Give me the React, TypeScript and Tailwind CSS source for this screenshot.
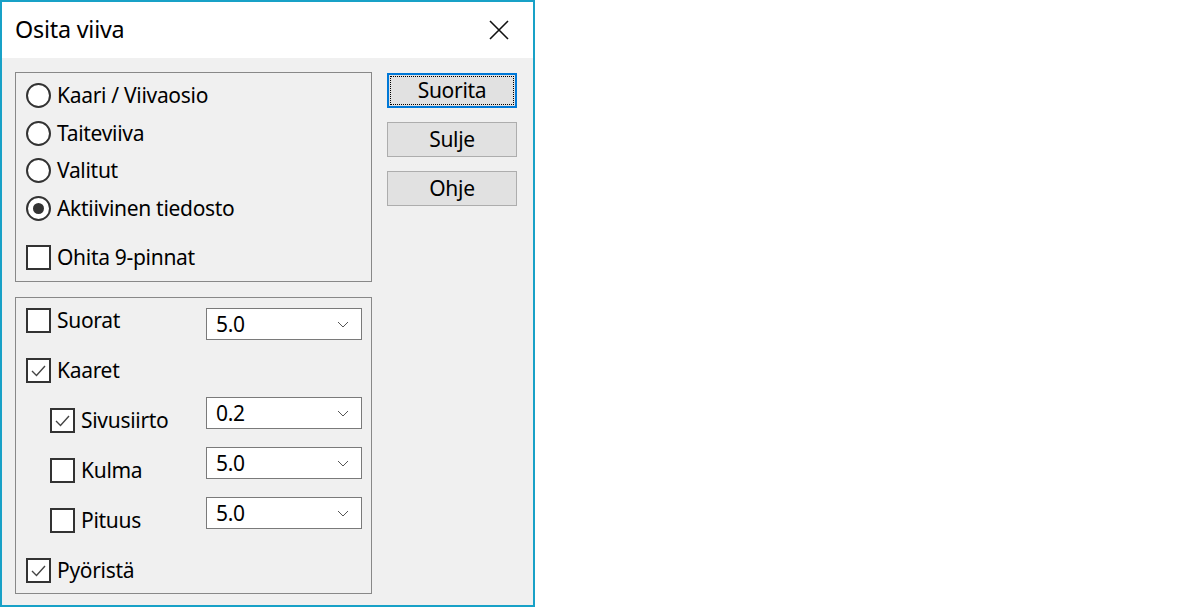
import React from "react";

const font = { fontFamily: '"Noto Sans", "Segoe UI", Arial, sans-serif' };

function Radio({ checked, label }: { checked?: boolean; label: string }) {
  return (
    <div className="flex items-center h-[37.5px] shrink-0 gap-[6px]">
      <div className="w-[25px] h-[25px] rounded-full border-2 border-[#333] bg-white flex items-center justify-center shrink-0">
        {checked && <div className="w-[11px] h-[11px] rounded-full bg-[#333]" />}
      </div>
      <span className="text-[21px] leading-none text-black tracking-[-0.3px]">{label}</span>
    </div>
  );
}

function Check({ checked, label }: { checked?: boolean; label: string }) {
  return (
    <div className="flex items-center gap-[6px] h-[25px]">
      <div className="w-[25px] h-[25px] border-2 border-[#333] bg-white flex items-center justify-center shrink-0">
        {checked && (
          <svg width="21" height="21" viewBox="0 0 21 21">
            <path d="M4 11 L8.5 15.5 L17 6" fill="none" stroke="#444" strokeWidth="1.4" />
          </svg>
        )}
      </div>
      <span className="text-[21px] leading-none text-black tracking-[-0.3px]">{label}</span>
    </div>
  );
}

function Combo({ value, className = "" }: { value: string; className?: string }) {
  return (
    <div
      className={`w-[156px] h-[32px] bg-white border border-[#7a7a7a] flex items-center justify-between pl-[9px] pr-[12px] ${className}`}
    >
      <span className="text-[21px] leading-none text-black tracking-[-0.3px]">{value}</span>
      <svg width="12" height="7" viewBox="0 0 12 7">
        <path d="M1 1 L6 6 L11 1" fill="none" stroke="#555" strokeWidth="1" />
      </svg>
    </div>
  );
}

function Button({ label, primary }: { label: string; primary?: boolean }) {
  return (
    <div
      className={`w-[130px] h-[35px] bg-[#e1e1e1] flex items-center justify-center relative ${
        primary ? "border-2 border-[#0078d7]" : "border border-[#adadad]"
      }`}
    >
      {primary && <div className="absolute inset-[1px] border border-dotted border-black" />}
      <span className="text-[21px] leading-none text-black tracking-[-0.3px]">{label}</span>
    </div>
  );
}

export default function App() {
  return (
    <div className="w-[1200px] h-[607px] bg-white" style={font}>
      <div className="w-[535px] h-[607px] border-2 border-[#18a1c7] flex flex-col">
        <div className="h-[56px] shrink-0 bg-white flex items-center justify-between pl-[13px] pr-[24px]">
          <span className="text-[23.3px] leading-none text-black tracking-[-0.2px]">Osita viiva</span>
          <svg width="20" height="20" viewBox="0 0 20 20">
            <path d="M1 1 L19 19 M19 1 L1 19" stroke="#111" strokeWidth="1.6" fill="none" />
          </svg>
        </div>
        <div className="flex-1 bg-[#f0f0f0] flex pl-[13px] pt-[14px]">
          <div className="w-[357px] flex flex-col">
            <div className="h-[210px] shrink-0 border border-[#888] pl-[10px] pt-[4px] flex flex-col">
              <Radio label="Kaari / Viivaosio" />
              <Radio label="Taiteviiva" />
              <Radio label="Valitut" />
              <Radio label="Aktiivinen tiedosto" checked />
              <div className="mt-[18px] shrink-0">
                <Check label="Ohita 9-pinnat" />
              </div>
            </div>
            <div className="mt-[15px] h-[297px] shrink-0 overflow-hidden border border-[#888] pl-[10px] pt-[10px] flex flex-col">
              <div className="h-[50px] shrink-0 flex items-start">
                <div className="w-[180px]">
                  <Check label="Suorat" />
                </div>
                <Combo value="5.0" />
              </div>
              <div className="h-[50px] shrink-0 flex items-start">
                <Check label="Kaaret" checked />
              </div>
              <div className="h-[50px] shrink-0 flex items-start">
                <div className="w-[180px] pl-[24px]">
                  <Check label="Sivusiirto" checked />
                </div>
                <Combo value="0.2" className="-mt-[11px]" />
              </div>
              <div className="h-[50px] shrink-0 flex items-start">
                <div className="w-[180px] pl-[24px]">
                  <Check label="Kulma" />
                </div>
                <Combo value="5.0" className="-mt-[11px]" />
              </div>
              <div className="h-[50px] shrink-0 flex items-start">
                <div className="w-[180px] pl-[24px]">
                  <Check label="Pituus" />
                </div>
                <Combo value="5.0" className="-mt-[11px]" />
              </div>
              <div className="h-[50px] shrink-0 flex items-start">
                <Check label="Pyöristä" checked />
              </div>
            </div>
          </div>
          <div className="ml-[15px] pt-[1px] flex flex-col gap-[14px]">
            <Button label="Suorita" primary />
            <Button label="Sulje" />
            <Button label="Ohje" />
          </div>
        </div>
      </div>
    </div>
  );
}
